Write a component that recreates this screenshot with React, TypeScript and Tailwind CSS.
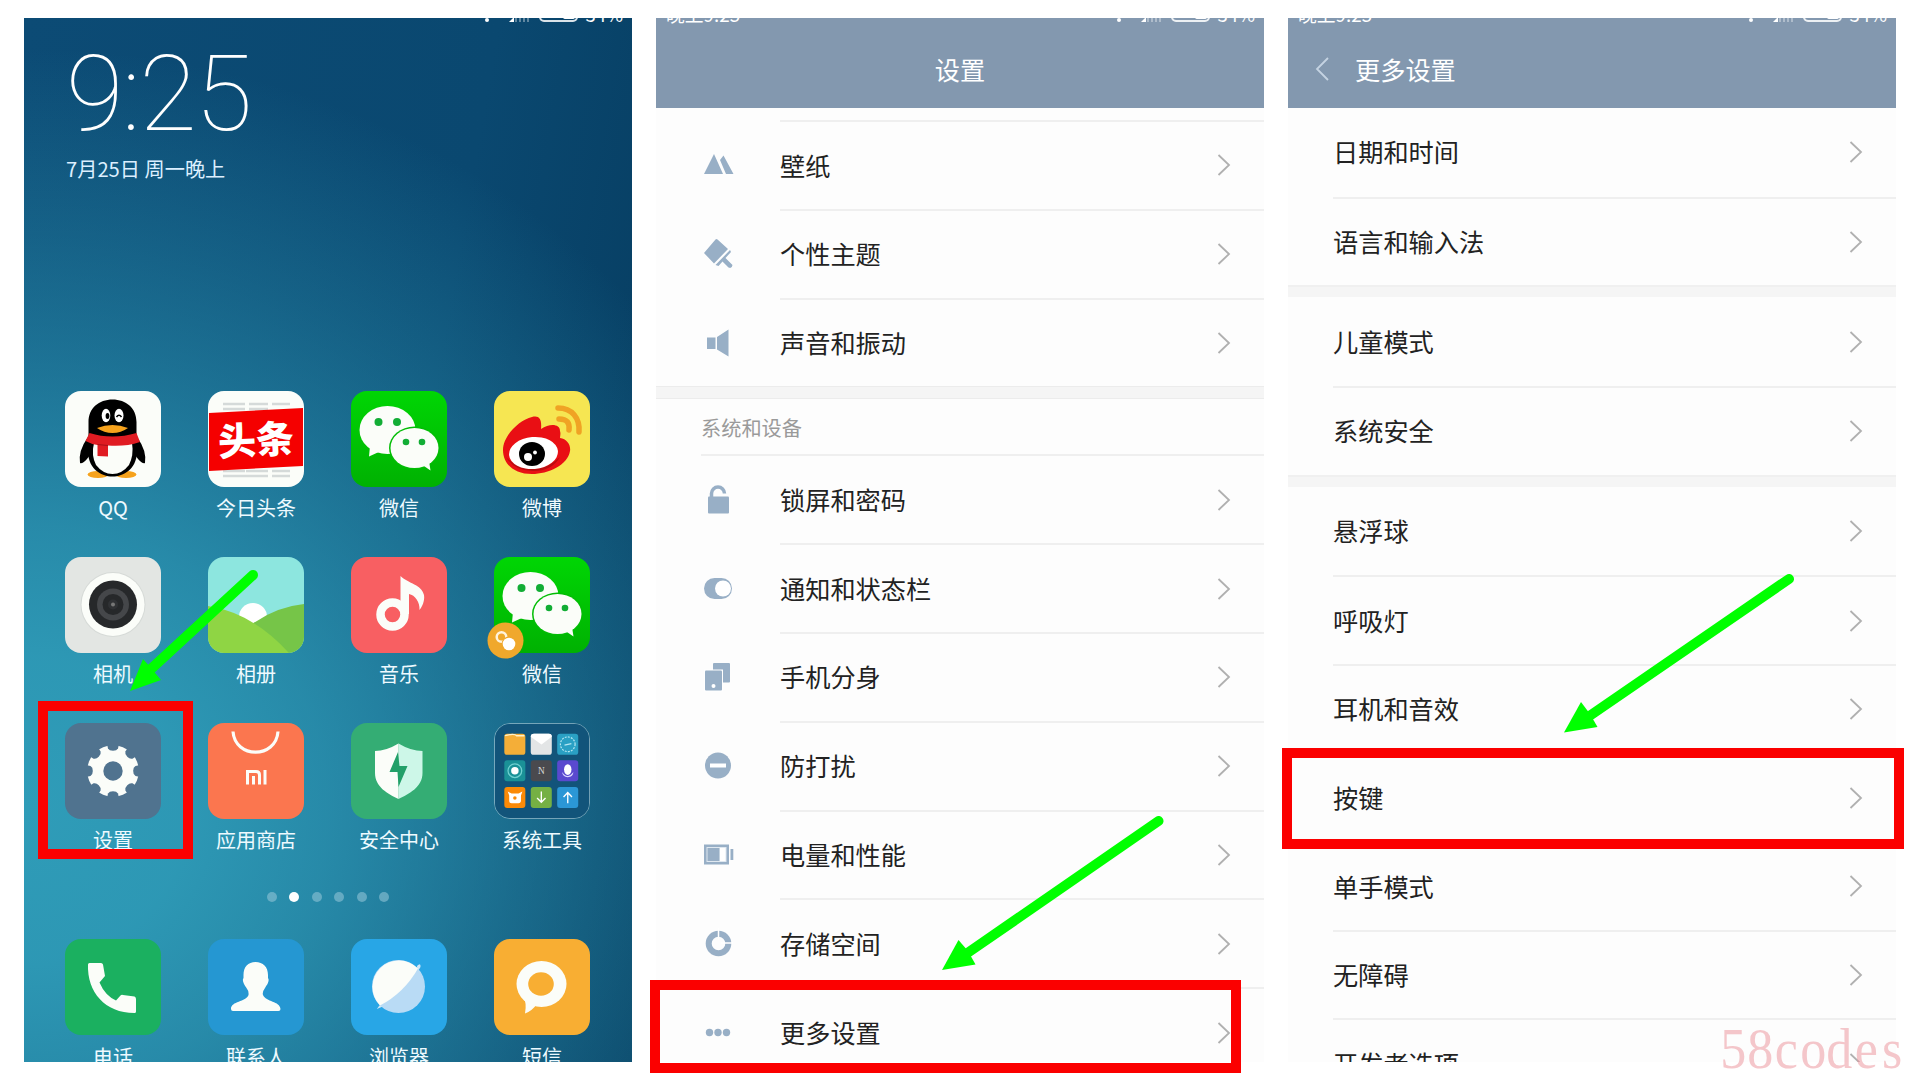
import type { ReactNode } from "react";

const BLUE = "#98afc6";

function StatusIcons() {
  return (
    <div className="flex items-end pb-[2px]">
      <div className="mr-[20px] size-[4px] rounded-full bg-white" />
      <svg className="mr-[9px] block" width="21" height="8" viewBox="0 0 21 8">
        <path d="M0 8 L5 3 V8Z" fill="#fff" />
        <path d="M7 8V0M11 8V0M15 8V0M19 8V0" stroke="#fff" strokeOpacity=".35" strokeWidth="2" />
      </svg>
      <div className="mr-[7px] flex h-[14px] w-[39px] justify-end rounded-[5px] border-2 border-white/85 p-px">
        <div className="h-full w-[12px] rounded-[2px] bg-white" />
      </div>
      <span className="-mb-[4px] block h-[24px] text-[18.500px] leading-[24px]">34%</span>
    </div>
  );
}

/* Strip at the top of each phone; the upper part of the status line is cut off. */
function StatusBar({ time }: { time?: string }) {
  return (
    <div className="flex h-[6px] shrink-0 items-end justify-between overflow-hidden pl-[10px] pr-[9px] text-white">
      <span className="-mb-[3px] block h-[26px] text-[18.800px] leading-[26px] whitespace-nowrap">{time}</span>
      <StatusIcons />
    </div>
  );
}

function Tile({ bg, children, border }: { bg: string; children: ReactNode; border?: boolean }) {
  return (
    <svg width="96" height="96" viewBox="0 0 96 96" className={border ? "block overflow-hidden rounded-[16px] border border-white/40" : "block overflow-hidden rounded-[16px]"}>
      <rect width="96" height="96" fill={bg} />
      {children}
    </svg>
  );
}

function QQ() {
  return (
    <Tile bg="#fbfdf9">
      <ellipse cx="33" cy="83.500" rx="10.500" ry="3.500" fill="#f6a21c" />
      <ellipse cx="61" cy="83.500" rx="10.500" ry="3.500" fill="#f6a21c" />
      <path d="M23 46 Q13 60 15 72 Q18 74 25 64 Z M72 46 Q82 60 80 72 Q77 74 70 64 Z" fill="#000" />
      <path d="M23.500 44 V31 C23.500 17 34 8.500 47.500 8.500 S71.500 17 71.500 31 V44 Q73 52 72 62 C71 78 59 85.500 47.500 85.500 S24 78 23 62 Q22 52 23.500 44Z" fill="#000" />
      <path d="M29 52 H67 Q69 64 64 74 Q57 83 47.500 83 T31 74 Q26 64 29 52Z" fill="#fbfdf9" />
      <ellipse cx="41" cy="24.500" rx="4.300" ry="6.800" fill="#fff" />
      <ellipse cx="54" cy="24.500" rx="4.500" ry="6.800" fill="#fff" />
      <ellipse cx="42.500" cy="25" rx="1.900" ry="3" fill="#000" />
      <path d="M51.500 26 Q54 22.500 56.500 26" stroke="#000" strokeWidth="1.500" fill="none" />
      <path d="M32 37 Q47.500 31 63 37 Q56 42 47.500 42 T32 37Z" fill="#f6a21c" />
      <path d="M24.500 42 Q47 49 71.500 42 L75 51 Q60 56 43 54.500 V65.500 L32.500 65 V54 Q26 53 20.500 50Z" fill="#e01b22" />
      <path d="M32.500 53.500 L43 54.500" stroke="#a80f16" strokeWidth="1" />
    </Tile>
  );
}

function Toutiao() {
  return (
    <Tile bg="#fbfdf9">
      <path d="M15 13H37M41 13H60M64 13H82M15 18H37M41 18H60M15 80H37M38 80H60M64 80H82M15 85H60M64 85H82" stroke="#d5dad9" strokeWidth="2.500" />
      <path d="M1 22 L95 17 V75 L1 80Z" fill="#f50000" />
      <text x="48" y="63" fontSize="38" fontWeight="900" fill="#fff" textAnchor="middle" transform="rotate(-3 48 48)" fontFamily="'Noto Sans CJK SC', sans-serif">
        头条
      </text>
    </Tile>
  );
}

function WeChat() {
  return (
    <Tile bg="url(#wechat)">
      <defs>
        <linearGradient id="wechat" x1="0" y1="0" x2="0" y2="1">
          <stop offset="0" stopColor="#00d604" />
          <stop offset="1" stopColor="#00b102" />
        </linearGradient>
      </defs>
      <path d="M19 55 L18 65.500 L30 60Z" fill="#fbfdf9" />
      <ellipse cx="36.500" cy="39" rx="28" ry="24" fill="#fbfdf9" />
      <ellipse cx="63.500" cy="57" rx="25.500" ry="21.500" fill="#02bd05" />
      <path d="M70 73 L79.500 79.500 L78 70Z" fill="#fbfdf9" />
      <ellipse cx="63.500" cy="57" rx="24" ry="20" fill="#fbfdf9" />
      <g fill="#12ad35">
        <circle cx="27.500" cy="31" r="4" />
        <circle cx="46" cy="31" r="4" />
        <circle cx="55" cy="51" r="3.300" />
        <circle cx="71" cy="51" r="3.300" />
      </g>
    </Tile>
  );
}

function CloneWeChat() {
  return (
    <div className="relative">
      <WeChat />
      <svg className="absolute -left-[7px] top-[65px]" width="37" height="37" viewBox="0 0 37 37">
        <circle cx="18.500" cy="18.500" r="18" fill="#f0a82c" />
        <circle cx="14.500" cy="15" r="4.800" fill="none" stroke="#fff3dc" strokeWidth="2.500" />
        <circle cx="22" cy="22" r="7.500" fill="#f0a82c" />
        <circle cx="22" cy="22" r="6.300" fill="#fff" />
      </svg>
    </div>
  );
}

function Weibo() {
  return (
    <Tile bg="#f6e652">
      <path d="M9 59 C9 45 25 29 38 26 C45 24 48 28 47 38 C56 32 66 33 66 40 C67 43 66 45 66 47 C73 48 77 54 76 60 C74 74 54 83 38 83 C20 83 9 73 9 59Z" fill="#e90f14" />
      <path d="M12 66 Q20 80 39 80 T66 66 Q54 78 39 78 T12 66Z" fill="#b90d10" />
      <ellipse cx="39.500" cy="62" rx="24.500" ry="16" fill="#fff" transform="rotate(-5 39.500 62)" />
      <ellipse cx="38" cy="63" rx="13" ry="12" fill="#000" />
      <circle cx="34" cy="66" r="4" fill="#fff" />
      <circle cx="41" cy="61.500" r="1.900" fill="#fff" />
      <path d="M64 17 C78 17 86 27 85 41 M65 28 C73 28 76 32 75 39" fill="none" stroke="#f0a324" strokeWidth="5.500" strokeLinecap="round" />
    </Tile>
  );
}

function Camera() {
  return (
    <Tile bg="#e3e6e3">
      <circle cx="48" cy="47.500" r="32.500" fill="#d6dad7" />
      <circle cx="48" cy="47.500" r="31.500" fill="#fbfdf9" />
      <circle cx="48" cy="47.500" r="24" fill="#26282a" />
      <circle cx="48" cy="47.500" r="16" fill="#45474a" />
      <circle cx="48" cy="47.500" r="10.500" fill="#26282a" />
      <circle cx="48" cy="47.500" r="5" fill="#303235" />
      <circle cx="48" cy="47.500" r="2" fill="#777" />
    </Tile>
  );
}

function Gallery() {
  return (
    <Tile bg="#8de6df">
      <circle cx="45" cy="60" r="14" fill="#fff" />
      <path d="M40 70 Q66 50 96 47 V96 H60Z" fill="#76c548" />
      <path d="M0 49 Q45 56 81 96 H0Z" fill="#8fd544" />
    </Tile>
  );
}

function Music() {
  return (
    <Tile bg="#f85f62">
      <circle cx="41.500" cy="57.500" r="12" fill="none" stroke="#fbfdf9" strokeWidth="8.500" />
      <path d="M49.500 19 C58 27 70 27 73 38 C74 44 71 50 68.500 53 C69 45 64 38 58 37 V57 H49.500Z" fill="#fbfdf9" />
    </Tile>
  );
}

function Gear() {
  return (
    <Tile bg="#50738f">
      <circle cx="48" cy="48" r="25.800" fill="#fbfdf9" />
      {[0, 45, 90, 135, 180, 225, 270, 315].map((a) => (
        <path key={a} d="M42 21 L43 25.500 A5.300 3.500 0 0 0 53 25.500 L54 21Z" fill="#50738f" transform={`rotate(${a} 48 48)`} />
      ))}
      <circle cx="48" cy="48" r="9.700" fill="#50738f" />
    </Tile>
  );
}

function Store() {
  return (
    <Tile bg="#fb764f">
      <path d="M25 8.500 C27 36 68 36 70 8.500" fill="none" stroke="#fbfdf9" strokeWidth="3.200" />
      <path d="M39.500 61.500 V48.500 H48 Q51.500 48.500 51.500 52 V61.500 M45.500 53 V61.500 M57 47 V61.500" fill="none" stroke="#fbfdf9" strokeWidth="3" />
    </Tile>
  );
}

function Security() {
  return (
    <Tile bg="#34ad74">
      <path d="M47.500 20.500 Q60 28 71.500 28 V50 C71.500 64 58 71 47.500 76Z" fill="#cdf7e8" />
      <path d="M47.500 20.500 Q35 28 24 28 V50 C24 64 37 71 47.500 76Z" fill="#fbfdf9" />
      <path d="M47 29 L38.500 49 H46.500 L47.500 64 L56.500 43 H48.500Z" fill="#22a069" />
    </Tile>
  );
}

function Tools() {
  return (
    <Tile bg="#12547a" border>
      <rect x="9.500" y="10" width="21.500" height="21.500" rx="3" fill="#f4ae38" />
      <path d="M10 12 Q20 9 22 12 H30" stroke="#fff1c9" strokeWidth="1.300" fill="none" />
      <rect x="36.500" y="10" width="21.500" height="21.500" rx="3" fill="#e3e5e6" />
      <path d="M36.500 13 Q36.500 10 40 10 H55 Q58 10 58 13 L47.500 21Z" fill="#fff" />
      <rect x="63.500" y="10" width="21.500" height="21.500" rx="3" fill="#2aa0c4" />
      <circle cx="74.300" cy="20.700" r="7.500" fill="none" stroke="#b5e6f2" strokeWidth="1.200" strokeDasharray="2 1.200" />
      <path d="M71 21.500 L78 20" stroke="#b5e6f2" strokeWidth="1.300" />
      <rect x="9.500" y="37" width="21.500" height="21.500" rx="3" fill="#1a9197" />
      <circle cx="20.300" cy="47.700" r="7" fill="none" stroke="#6fd0d0" strokeWidth="1.300" />
      <circle cx="20.300" cy="47.700" r="3.800" fill="#fff" />
      <rect x="36.500" y="37" width="21.500" height="21.500" rx="3" fill="#4a4a4e" />
      <text x="47.300" y="51.300" fontSize="9.500" textAnchor="middle" fill="#d8d8d8" fontFamily="'Liberation Serif', serif">
        N
      </text>
      <rect x="63.500" y="37" width="21.500" height="21.500" rx="3" fill="#5a49cf" />
      <ellipse cx="74.300" cy="46.500" rx="3.800" ry="5.500" fill="#fff" />
      <path d="M68.500 49 Q74 57 80 49 Q80 54 74.300 54.500 Q69 54 68.500 49Z" fill="#d9d4ff" />
      <rect x="9.500" y="64.300" width="21.500" height="21.500" rx="3" fill="#fb8a07" />
      <path d="M13 69 L17 71 H24 L28 69 L26.500 73 V79 Q26 81 24 81 H17 Q14.500 81 14.500 79 V73Z" fill="#fff" />
      <circle cx="20.300" cy="75.500" r="1.800" fill="#fb8a07" />
      <rect x="36.500" y="64.300" width="21.500" height="21.500" rx="3" fill="#75b044" />
      <path d="M47.300 69 V79.500 M43 75.500 L47.300 80 L51.600 75.500" stroke="#fff" strokeWidth="1.400" fill="none" />
      <rect x="63.500" y="64.300" width="21.500" height="21.500" rx="3" fill="#2b97d6" />
      <path d="M74.300 81 V70.500 M70 74.500 L74.300 70 L78.600 74.500" stroke="#fff" strokeWidth="1.400" fill="none" />
    </Tile>
  );
}

function Phone() {
  return (
    <Tile bg="#1bb060">
      <path d="M23 25.500 Q23 24 24.500 24 H36 Q37.500 24 38 25.500 L40 37 L34.500 43.500 Q40 56.500 51 61.500 L55.500 56.500 Q56.500 55.500 58 56 L69.500 57.500 Q71 58 71 60 V72.500 Q71 74 69.500 74 C40 74 22 53 23 25.500Z" fill="#fbfdf9" />
    </Tile>
  );
}

function Contacts() {
  return (
    <Tile bg="#2597d2">
      <path d="M47.500 23 C55 23 60 28 60 36 V39 Q61.500 41 59.500 45 Q58 47 57 49 Q54 53 55 56 C58 63 72 62 72.500 70 Q72.500 72 70.500 72 H25 Q23 72 23 70 C23 62 38 63 40.500 56 Q41 52 38.500 49 Q37 47 36 45 Q34 41 35.500 39 V36 C35.500 28 40 23 47.500 23Z" fill="#fbfdf9" />
    </Tile>
  );
}

function Browser() {
  return (
    <Tile bg="#28a6e6">
      <path d="M66 27 Q70 23 69.500 28 L66.500 33Z M29 66 Q24 72 27 69.500 L33 67Z" fill="#cfe7f8" />
      <circle cx="47.500" cy="47.500" r="26.500" fill="#b9dbf5" />
      <path d="M67 29.500 A26.500 26.500 0 1 0 29 66.500 Q53 54 67 29.500Z" fill="#fbfdf9" />
    </Tile>
  );
}

function Sms() {
  return (
    <Tile bg="#f8ae33">
      <path d="M29 56 Q33 64 31 74.500 Q38 72 43 65Z" fill="#fbfdf9" />
      <ellipse cx="47.500" cy="45" rx="25" ry="23" fill="#fbfdf9" />
      <ellipse cx="47" cy="45" rx="12.800" ry="11.800" fill="#f8ae33" />
    </Tile>
  );
}

const apps: [string, ReactNode][] = [
  ["QQ", <QQ />],
  ["今日头条", <Toutiao />],
  ["微信", <WeChat />],
  ["微博", <Weibo />],
  ["相机", <Camera />],
  ["相册", <Gallery />],
  ["音乐", <Music />],
  ["微信", <CloneWeChat />],
  ["设置", <Gear />],
  ["应用商店", <Store />],
  ["安全中心", <Security />],
  ["系统工具", <Tools />],
];

const dock: [string, ReactNode][] = [
  ["电话", <Phone />],
  ["联系人", <Contacts />],
  ["浏览器", <Browser />],
  ["短信", <Sms />],
];

function AppGrid({ items }: { items: [string, ReactNode][] }) {
  return (
    <div className="grid shrink-0 grid-cols-4 pl-[17.500px] pr-[18.500px]">
      {items.map(([name, icon], i) => (
        <div key={i} className="flex h-[166px] flex-col items-center">
          {icon}
          <span className="mt-[6.500px] text-[20px] leading-[30px] text-[#eefaff]">{name}</span>
        </div>
      ))}
    </div>
  );
}

function HomeScreen() {
  return (
    <section className="flex h-[1044px] w-[608px] flex-col overflow-hidden bg-[radial-gradient(ellipse_820px_760px_at_0px_790px,#2f9cb8_0%,#2f9cb8f2_20%,#2f9cb8c8_37%,#2f9cb87a_60%,#2f9cb84a_75%,#2f9cb800_100%),linear-gradient(100deg,#0c4b75_0%,#0a4870_60%,#063b5e_100%)]">
      <StatusBar />
      <div className="h-[366.500px] shrink-0 pl-[42px] text-white">
        <div className="mt-[15px] h-[112px] font-['Roboto'] text-[105px] leading-[112px] font-thin tracking-[-1.500px] whitespace-nowrap">9:25</div>
        <div className="mt-[3px] text-[20.200px] leading-[30px] text-[#dcefff]">7月25日 周一晚上</div>
      </div>
      <AppGrid items={apps} />
      <div className="flex h-[50.500px] shrink-0 justify-center gap-[12.600px] pt-[3px]">
        {[0, 1, 2, 3, 4, 5].map((i) => (
          <div key={i} className={i === 1 ? "size-[10px] rounded-full bg-white" : "size-[10px] rounded-full bg-[#8fc3d6]/60"} />
        ))}
      </div>
      <AppGrid items={dock} />
    </section>
  );
}

function Chevron() {
  return (
    <svg className="ml-auto mr-[33px] block" width="14" height="22" viewBox="0 0 14 22">
      <path d="M1.500 1 L12 11 L1.500 21" fill="none" stroke="#b0b0b0" strokeWidth="1.800" />
    </svg>
  );
}

function ListIcon({ children }: { children: ReactNode }) {
  return (
    <svg className="ml-[47px] mr-[46px] block shrink-0 overflow-visible" width="31" height="30" viewBox="0 0 31 30" fill={BLUE}>
      {children}
    </svg>
  );
}

function IconRow({ icon, label }: { icon: ReactNode; label: string }) {
  return (
    <div className="flex h-[88.800px] shrink-0 items-center">
      <ListIcon>{icon}</ListIcon>
      <div className="flex h-full flex-1 items-center border-t-2 border-[#efefef] text-[25.200px]">
        <span>{label}</span>
        <Chevron />
      </div>
    </div>
  );
}

const topRows: [string, ReactNode][] = [
  ["壁纸", <path d="M1 25 L11 5 L20 25Z M17 11 L20.500 6.500 L30.500 25 H23Z" />],
  [
    "个性主题",
    <>
      <path d="M1 15 L12.500 1.500 Q13.500 .5 14.500 1.500 L25 11 L11 25.500Z" />
      <path d="M12.500 27 L27 12 L28 14 L22.500 20 L29.500 27 Q29 31 25.500 29.500 L19.500 23.500 L15.500 28Z" />
    </>,
  ],
  ["声音和振动", <path d="M4 10.500 H12.500 V22 H4Z M14 10 L25.500 2.500 V29.500 L14 22.500Z" />],
];

const systemRows: [string, ReactNode][] = [
  [
    "锁屏和密码",
    <>
      <path d="M8.500 13 V9.500 A6.500 6.500 0 0 1 21.500 9.500" fill="none" stroke={BLUE} strokeWidth="3.500" />
      <rect x="5" y="12.500" width="21" height="17" rx="1" />
    </>,
  ],
  [
    "通知和状态栏",
    <>
      <rect x="1" y="5" width="28" height="21" rx="10.500" />
      <circle cx="20" cy="15.500" r="8" fill="#fff" />
    </>,
  ],
  [
    "手机分身",
    <>
      <rect x="10" y="2" width="17" height="19.500" rx="1" />
      <rect x="1" y="8.500" width="19" height="22" fill="#fff" />
      <rect x="2" y="9.500" width="17" height="20" rx="1" />
      <circle cx="10.500" cy="25" r="2" fill="#fff" />
    </>,
  ],
  [
    "防打扰",
    <>
      <circle cx="15" cy="15.500" r="13" />
      <rect x="7" y="13.500" width="16" height="4" fill="#fff" />
    </>,
  ],
  [
    "电量和性能",
    <>
      <rect x="1" y="5.500" width="25" height="20" />
      <rect x="3.500" y="8" width="20" height="15" fill="#dfe8f0" />
      <rect x="16.500" y="9" width="6" height="13" fill="#fff" />
      <rect x="4.500" y="9" width="12" height="13" />
      <rect x="27.500" y="10" width="2.800" height="11" />
    </>,
  ],
  [
    "存储空间",
    <>
      <circle cx="15.500" cy="15.500" r="9.800" fill="none" stroke={BLUE} strokeWidth="6" />
      <path d="M15.500 12 V0 M18 15 H30" stroke="#fff" strokeWidth="1.500" />
    </>,
  ],
  [
    "更多设置",
    <>
      <circle cx="6.500" cy="15.500" r="3.700" />
      <circle cx="15" cy="15.500" r="3.700" />
      <circle cx="23.500" cy="15.500" r="3.700" />
    </>,
  ],
];

function SettingsScreen() {
  return (
    <section className="flex h-[1044px] w-[608px] flex-col overflow-hidden bg-[#fdfdfd] text-[#222]">
      <header className="h-[90px] shrink-0 bg-[#8398af]">
        <StatusBar time="晚上9:25" />
        <h1 className="pt-[27px] text-center text-[25.200px] leading-[36px] text-white">设置</h1>
      </header>
      <div className="h-[12px] shrink-0" />
      {topRows.map(([label, icon]) => (
        <IconRow key={label} label={label} icon={icon} />
      ))}
      <div className="h-[13px] shrink-0 border-y border-[#ececec] bg-[#f5f5f5]" />
      <div className="flex h-[55px] shrink-0 items-center pl-[45px] pt-[2px] text-[20.200px] text-[#9a9a9a]">系统和设备</div>
      <div className="-mb-[2px] ml-[45px] h-[2px] shrink-0 bg-[#efefef]" />
      {systemRows.map(([label, icon]) => (
        <IconRow key={label} label={label} icon={icon} />
      ))}
    </section>
  );
}

const groups = [
  ["日期和时间", "语言和输入法"],
  ["儿童模式", "系统安全"],
  ["悬浮球", "呼吸灯", "耳机和音效", "按键", "单手模式", "无障碍", "开发者选项"],
];

function MoreSettingsScreen() {
  return (
    <section className="flex h-[1044px] w-[608px] flex-col overflow-hidden bg-[#fdfdfd] text-[#222]">
      <header className="h-[90px] shrink-0 bg-[#8398af]">
        <StatusBar time="晚上9:25" />
        <div className="flex items-center pt-[27px]">
          <svg className="ml-[27px] mr-[25px] block" width="15" height="24" viewBox="0 0 15 24">
            <path d="M13 1 L2 12 L13 23" fill="none" stroke="#c5d3e2" strokeWidth="1.800" />
          </svg>
          <h1 className="text-[25.200px] leading-[36px] text-white">更多设置</h1>
        </div>
      </header>
      {groups.map((rows, g) => (
        <div key={g} className="shrink-0">
          {g > 0 && <div className="h-[12.200px] border-t-2 border-[#f0f0f0] bg-[#f5f5f5]" />}
          {rows.map((label, i) => (
            <div key={label} className={i ? "ml-[45px] flex h-[88.600px] items-center border-t-2 border-[#efefef] text-[25.200px]" : "ml-[45px] flex h-[88.600px] items-center text-[25.200px]"}>
              <span>{label}</span>
              <Chevron />
            </div>
          ))}
        </div>
      ))}
    </section>
  );
}

function Annotations() {
  return (
    <>
      <div className="absolute left-[38px] top-[701px] h-[158px] w-[155px] border-[10px] border-[#fb0000]" />
      <div className="absolute left-[650px] top-[980px] h-[93px] w-[591px] border-[10px] border-[#fb0000]" />
      <div className="absolute left-[1282px] top-[748px] h-[101px] w-[622px] border-[10px] border-[#fb0000]" />
      <svg className="absolute left-0 top-0" width="1920" height="1080" viewBox="0 0 1920 1080" fill="#00ff00" stroke="#00ff00">
        <g strokeWidth="10" strokeLinecap="round">
          <path d="M253 575 L151 669" />
          <path d="M1158.500 821 L966 954" />
          <path d="M1789 579 L1588 717" />
        </g>
        <g stroke="none">
          <path d="M130 691 L143 659 L151 668 L161 680Z" />
          <path d="M942 970 L958.500 940 L968 951 L975.500 964.500Z" />
          <path d="M1564 732.500 L1581 702 L1590 714 L1597.500 727Z" />
        </g>
      </svg>
      <div className="absolute left-[1720px] top-[1018px] flex font-['Liberation_Serif',serif] text-[56px] leading-[62px] text-[#ec8f97]/50">
        {"58codes".split("").map((c, i) => (
          <span key={i} className="flex w-[26.500px] scale-x-[0.93] justify-center">
            {c}
          </span>
        ))}
      </div>
    </>
  );
}

export default function App() {
  return (
    <main className="relative flex h-[1080px] w-[1920px] gap-6 overflow-hidden bg-white px-6 pt-[18px] font-['Noto_Sans_CJK_SC',sans-serif]">
      <HomeScreen />
      <SettingsScreen />
      <MoreSettingsScreen />
      <Annotations />
    </main>
  );
}
